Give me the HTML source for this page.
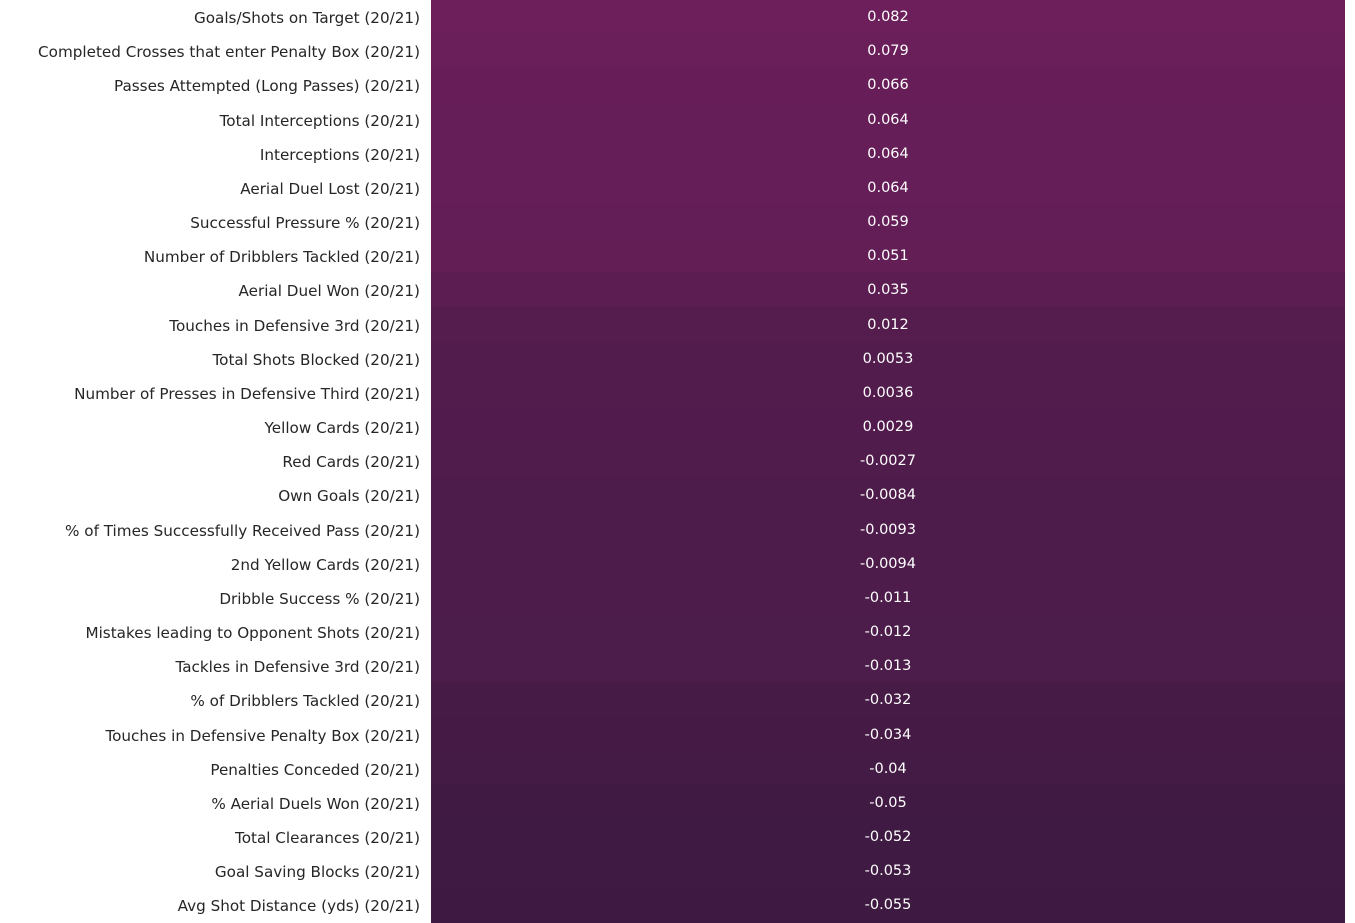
<!DOCTYPE html>
<html><head><meta charset="utf-8"><style>
body{margin:0;width:1355px;height:922px;background:#fff;position:relative;overflow:hidden;font-family:"DejaVu Sans",sans-serif;}
.r{position:absolute;left:0;width:1355px;height:35px;}
.l{position:absolute;right:935px;top:2px;line-height:34px;font-size:15.2px;color:#262626;white-space:nowrap;}
.c{position:absolute;left:431px;width:914px;top:0;height:35px;}
.v{position:absolute;left:431px;width:914px;top:1px;line-height:34px;text-align:center;font-size:14.5px;color:#fff;}
</style></head><body>
<div class="r" style="top:-1px"><div class="c" style="background:rgb(108,31,91)"></div><div class="l">Goals/Shots on Target (20/21)</div><div class="v">0.082</div></div>
<div class="r" style="top:33.2px"><div class="c" style="background:rgb(107,31,90)"></div><div class="l">Completed Crosses that enter Penalty Box (20/21)</div><div class="v">0.079</div></div>
<div class="r" style="top:67.3px"><div class="c" style="background:rgb(103,30,88)"></div><div class="l">Passes Attempted (Long Passes) (20/21)</div><div class="v">0.066</div></div>
<div class="r" style="top:101.5px"><div class="c" style="background:rgb(102,30,88)"></div><div class="l">Total Interceptions (20/21)</div><div class="v">0.064</div></div>
<div class="r" style="top:135.7px"><div class="c" style="background:rgb(102,30,88)"></div><div class="l">Interceptions (20/21)</div><div class="v">0.064</div></div>
<div class="r" style="top:169.9px"><div class="c" style="background:rgb(102,30,88)"></div><div class="l">Aerial Duel Lost (20/21)</div><div class="v">0.064</div></div>
<div class="r" style="top:204px"><div class="c" style="background:rgb(100,30,87)"></div><div class="l">Successful Pressure % (20/21)</div><div class="v">0.059</div></div>
<div class="r" style="top:238.2px"><div class="c" style="background:rgb(98,30,85)"></div><div class="l">Number of Dribblers Tackled (20/21)</div><div class="v">0.051</div></div>
<div class="r" style="top:272.4px"><div class="c" style="background:rgb(92,29,82)"></div><div class="l">Aerial Duel Won (20/21)</div><div class="v">0.035</div></div>
<div class="r" style="top:306.5px"><div class="c" style="background:rgb(85,28,78)"></div><div class="l">Touches in Defensive 3rd (20/21)</div><div class="v">0.012</div></div>
<div class="r" style="top:340.7px"><div class="c" style="background:rgb(82,28,77)"></div><div class="l">Total Shots Blocked (20/21)</div><div class="v">0.0053</div></div>
<div class="r" style="top:374.9px"><div class="c" style="background:rgb(82,28,77)"></div><div class="l">Number of Presses in Defensive Third (20/21)</div><div class="v">0.0036</div></div>
<div class="r" style="top:409px"><div class="c" style="background:rgb(81,28,77)"></div><div class="l">Yellow Cards (20/21)</div><div class="v">0.0029</div></div>
<div class="r" style="top:443.2px"><div class="c" style="background:rgb(80,28,76)"></div><div class="l">Red Cards (20/21)</div><div class="v">-0.0027</div></div>
<div class="r" style="top:477.4px"><div class="c" style="background:rgb(78,28,74)"></div><div class="l">Own Goals (20/21)</div><div class="v">-0.0084</div></div>
<div class="r" style="top:511.5px"><div class="c" style="background:rgb(77,28,74)"></div><div class="l">% of Times Successfully Received Pass (20/21)</div><div class="v">-0.0093</div></div>
<div class="r" style="top:545.7px"><div class="c" style="background:rgb(77,28,74)"></div><div class="l">2nd Yellow Cards (20/21)</div><div class="v">-0.0094</div></div>
<div class="r" style="top:579.9px"><div class="c" style="background:rgb(77,28,74)"></div><div class="l">Dribble Success % (20/21)</div><div class="v">-0.011</div></div>
<div class="r" style="top:614.1px"><div class="c" style="background:rgb(76,28,74)"></div><div class="l">Mistakes leading to Opponent Shots (20/21)</div><div class="v">-0.012</div></div>
<div class="r" style="top:648.2px"><div class="c" style="background:rgb(76,28,74)"></div><div class="l">Tackles in Defensive 3rd (20/21)</div><div class="v">-0.013</div></div>
<div class="r" style="top:682.4px"><div class="c" style="background:rgb(70,27,70)"></div><div class="l">% of Dribblers Tackled (20/21)</div><div class="v">-0.032</div></div>
<div class="r" style="top:716.6px"><div class="c" style="background:rgb(69,27,70)"></div><div class="l">Touches in Defensive Penalty Box (20/21)</div><div class="v">-0.034</div></div>
<div class="r" style="top:750.7px"><div class="c" style="background:rgb(67,27,69)"></div><div class="l">Penalties Conceded (20/21)</div><div class="v">-0.04</div></div>
<div class="r" style="top:784.9px"><div class="c" style="background:rgb(64,26,67)"></div><div class="l">% Aerial Duels Won (20/21)</div><div class="v">-0.05</div></div>
<div class="r" style="top:819.1px"><div class="c" style="background:rgb(63,26,67)"></div><div class="l">Total Clearances (20/21)</div><div class="v">-0.052</div></div>
<div class="r" style="top:853.2px"><div class="c" style="background:rgb(63,26,67)"></div><div class="l">Goal Saving Blocks (20/21)</div><div class="v">-0.053</div></div>
<div class="r" style="top:887.4px"><div class="c" style="background:rgb(62,26,66);height:36px"></div><div class="l">Avg Shot Distance (yds) (20/21)</div><div class="v">-0.055</div></div>
</body></html>
